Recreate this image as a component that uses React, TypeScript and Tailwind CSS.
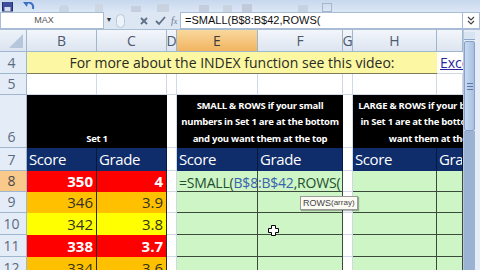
import React from "react";

const grid = "border-r border-b border-[#d0d7e5]";

function RowHead({ n, h, active }: { n: string; h: string; active?: boolean }) {
  return (
    <div
      className={`${h} w-[27px] shrink-0 flex items-end justify-center pb-[1px] pr-[3px] text-[14px] leading-none border-r border-b border-[#9eb6ce] ${
        active ? "bg-[#f9c98b] text-[#4a4a4a]" : "bg-[#e4ecf7] text-[#5b6b80]"
      }`}
    >
      <span className="pb-[2px]">{n}</span>
    </div>
  );
}

function QuickBar() {
  return (
    <div className="h-[12px] bg-gradient-to-b from-[#c7d8ee] to-[#dce7f5] flex items-end gap-[10px] pl-[2px] overflow-hidden">
      <svg width="11" height="10" viewBox="0 0 11 10">
        <rect x="0.5" y="-3" width="10" height="12" fill="#3d4f9a" stroke="#24326e" />
        <rect x="2.5" y="5" width="6" height="4" fill="#d8def0" />
      </svg>
      <svg width="12" height="10" viewBox="0 0 12 10">
        <path d="M2 2 C6 -1 11 1 10 7" fill="none" stroke="#3a6fc4" strokeWidth="2" />
        <path d="M0 0 L4 5 L5 0 Z" fill="#3a6fc4" />
      </svg>
      <div className="w-[10px] h-[7px] rounded-t-sm bg-[#c9d4e4] ml-[14px]" />
      <div className="w-[8px] h-[8px] bg-[#cdd6e3] ml-[16px]" />
      <div className="w-[10px] h-[6px] bg-[#c5cfdd] ml-[18px]" />
      <div className="w-[12px] h-[8px] bg-[#c9d2df] ml-[6px]" />
      <div className="w-[10px] h-[7px] bg-[#c3cddb] ml-[20px]" />
      <div className="w-[9px] h-[7px] bg-[#cad3e0] ml-[4px]" />
      <div className="w-[10px] h-[8px] bg-[#c0cadb]" />
      <div className="w-[10px] h-[7px] bg-[#c8d1df] ml-[36px]" />
      <div className="w-[10px] h-[9px] border border-[#a8b6ca] ml-[4px]" />
    </div>
  );
}

function FormulaBar() {
  return (
    <div className="h-[18px] flex bg-[#dde7f4] border-b border-[#a9bcd6]">
      <div className="w-[104px] bg-white border border-[#a9bcd6] flex items-center justify-center pr-[16px] text-[9px] text-[#555] font-['Liberation_Sans',sans-serif]">
        MAX
      </div>
      <div className="w-[10px] flex items-center justify-center text-[7px] text-[#333]">▼</div>
      <div className="w-[66px] flex items-center">
        <div className="w-[9px] h-[14px] rounded-full border border-[#b7c6da] bg-[#eef3fa] ml-[2px]" />
        <svg width="10" height="10" viewBox="0 0 10 10" className="ml-[14px]">
          <path d="M2 2 L8 8 M8 2 L2 8" stroke="#5f6f86" strokeWidth="1.8" />
        </svg>
        <svg width="11" height="10" viewBox="0 0 11 10" className="ml-[6px]">
          <path d="M1 5 L4 8 L10 1" fill="none" stroke="#5f6f86" strokeWidth="1.8" />
        </svg>
        <span className="ml-[5px] text-[10px] italic text-[#6b7890] font-['Liberation_Serif',serif]">
          f<span className="text-[8px]">x</span>
        </span>
      </div>
      <div className="flex-1 bg-white border border-[#a9bcd6] flex items-center pl-[4px] text-[11px] text-[#111] font-['Liberation_Sans',sans-serif]">
        =SMALL(B$8:B$42,ROWS(
      </div>
      <div className="w-[17px] bg-white border-y border-r border-[#a9bcd6] flex items-center justify-center">
        <svg width="8" height="10" viewBox="0 0 8 10">
          <path d="M1 1 L4 4 L7 1 M1 5 L4 8 L7 5" fill="none" stroke="#444" strokeWidth="1.2" />
        </svg>
      </div>
    </div>
  );
}

function ColHeaders() {
  const cols: [string, string, boolean?][] = [
    ["B", "w-[70px]"],
    ["C", "w-[70px]"],
    ["D", "w-[10px]"],
    ["E", "w-[81px]", true],
    ["F", "w-[85px]"],
    ["G", "w-[10px]"],
    ["H", "w-[84px]"],
    ["", "w-[26px]"],
  ];
  return (
    <div className="flex h-[22px]">
      <div className="w-[27px] bg-gradient-to-b from-[#eef3f9] to-[#dbe4f0] border-r border-b border-[#9eb6ce] relative">
        <div className="absolute right-[3px] bottom-[3px] w-0 h-0 border-l-[14px] border-l-transparent border-b-[14px] border-b-[#b6c7dc]" />
      </div>
      {cols.map(([l, w, act]) => (
        <div
          key={l + w}
          className={`${w} flex items-center justify-center text-[14px] border-r border-b border-[#9eb6ce] ${
            act
              ? "bg-gradient-to-b from-[#f9d89c] to-[#f1b45f] text-[#3b3b3b]"
              : "bg-gradient-to-b from-[#f3f6fb] to-[#dde5f0] text-[#4c5a70]"
          }`}
        >
          {l}
        </div>
      ))}
    </div>
  );
}

const navy = "bg-[#0f2c6b] text-white text-[15px] tracking-[-0.4px] border-r border-[#08183d] flex items-center pl-[2px] whitespace-nowrap";
const green = "bg-[#cdf5c6] border-r border-b border-[#3c4a3c]";
const banner = "text-white font-bold text-[9.5px] tracking-[-0.25px] leading-[16.5px] whitespace-nowrap";

function DataRow({
  n,
  h,
  bg,
  score,
  grade,
  light,
  active,
  formula,
}: {
  n: string;
  h: string;
  bg: string;
  score: string;
  grade: string;
  light?: boolean;
  active?: boolean;
  formula?: boolean;
}) {
  const txt = light ? "text-white font-bold" : "text-[#333320]";
  return (
    <div className={`flex ${h}`}>
      <RowHead n={n} h={h} active={active} />
      <div className={`w-[70px] ${bg} ${txt} border-r border-[#2b2b2b] flex items-center justify-end pr-[3px] text-[15px]`}>{score}</div>
      <div className={`w-[70px] ${bg} ${txt} border-r border-[#2b2b2b] flex items-center justify-end pr-[3px] text-[15px]`}>{grade}</div>
      <div className={`w-[10px] ${grid}`} />
      <div className={`w-[81px] ${green} relative`}>
        {formula && (
          <div className="absolute left-[2px] top-[1px] whitespace-nowrap text-[14px] tracking-[-0.2px] text-[#234f2c] z-10">
            =SMALL(<span className="text-[#3a62ad]">B$8:B$42</span>,ROWS(
          </div>
        )}
      </div>
      <div className={`w-[85px] ${green}`} />
      <div className={`w-[10px] ${grid}`} />
      <div className={`w-[84px] ${green}`} />
      <div className={`w-[26px] ${green}`} />
    </div>
  );
}

function ScrollBar() {
  return (
    <div className="w-[17px] h-[240px] bg-[#e6edf6] border-l border-[#b7c7dc] flex flex-col items-start">
      <div className="w-[11px] h-[8px] mt-[2px] border-b border-[#8fa6c6] bg-[#d9e4f2]" />
      <div className="w-[11px] h-[90px] mt-[1px] bg-gradient-to-r from-[#c9daf0] to-[#a7c0e2] border border-[#86a2c8] rounded-[2px] flex flex-col items-center justify-center gap-[2px]">
        <div className="w-[6px] h-[1px] bg-[#5c7aa5]" />
        <div className="w-[6px] h-[1px] bg-[#5c7aa5]" />
        <div className="w-[6px] h-[1px] bg-[#5c7aa5]" />
      </div>
      <div className="w-[11px] flex-1 bg-[#9bb2d3]" />
    </div>
  );
}

export default function App() {
  return (
    <div className="w-[480px] h-[270px] overflow-hidden bg-white relative font-['Open_Sans',sans-serif]">
      <QuickBar />
      <FormulaBar />
      <div className="flex">
        <div className="w-[463px] shrink-0">
          <ColHeaders />

          {/* row 4 */}
          <div className="flex h-[22px]">
            <RowHead n="4" h="h-[22px]" />
            <div className="w-[410px] bg-[#fbf7a3] border-b border-[#7d7a55] flex items-center justify-center text-[14px] text-[#2a2a22] leading-none">
              For more about the INDEX function see this video:
            </div>
            <div className="w-[26px] border-b border-[#d0d7e5] flex items-center pl-[3px] text-[14px] text-[#2626a0] underline overflow-hidden whitespace-nowrap leading-none">
              Excel
            </div>
          </div>

          {/* row 5 */}
          <div className="flex h-[21px]">
            <RowHead n="5" h="h-[21px]" />
            <div className={`w-[70px] ${grid}`} />
            <div className={`w-[70px] ${grid}`} />
            <div className={`w-[10px] ${grid}`} />
            <div className={`w-[81px] ${grid}`} />
            <div className={`w-[85px] ${grid}`} />
            <div className={`w-[10px] ${grid}`} />
            <div className={`w-[84px] ${grid}`} />
            <div className={`w-[26px] ${grid}`} />
          </div>

          {/* row 6 */}
          <div className="flex h-[53px]">
            <RowHead n="6" h="h-[53px]" />
            <div className={`w-[140px] bg-black ${banner} flex items-end justify-center pb-[1px]`}>Set 1</div>
            <div className={`w-[10px] ${grid}`} />
            <div className={`w-[166px] bg-black ${banner} flex flex-col items-center justify-end pb-[1px]`}>
              <div>SMALL &amp; ROWS if your small</div>
              <div>numbers in Set 1 are at the bottom</div>
              <div>and you want them at the top</div>
            </div>
            <div className={`w-[10px] ${grid}`} />
            <div className="w-[110px] bg-black overflow-hidden">
              <div className={`w-[168px] h-full ${banner} flex flex-col items-center justify-end pb-[1px]`}>
                <div>LARGE &amp; ROWS if your big numbers</div>
                <div>in Set 1 are at the bottom and you</div>
                <div>want them at the top</div>
              </div>
            </div>
          </div>

          {/* row 7 */}
          <div className="flex h-[23px]">
            <RowHead n="7" h="h-[23px]" />
            <div className={`w-[70px] ${navy}`}>Score</div>
            <div className={`w-[70px] ${navy}`}>Grade</div>
            <div className={`w-[10px] ${grid}`} />
            <div className={`w-[81px] ${navy}`}>Score</div>
            <div className={`w-[85px] ${navy}`}>Grade</div>
            <div className={`w-[10px] ${grid}`} />
            <div className={`w-[84px] ${navy}`}>Score</div>
            <div className={`w-[26px] ${navy} overflow-hidden`}>Grade</div>
          </div>

          <DataRow n="8" h="h-[21px]" bg="bg-[#ff0000]" score="350" grade="4" light active formula />
          <DataRow n="9" h="h-[21px]" bg="bg-[#ffc000]" score="346" grade="3.9" />
          <DataRow n="10" h="h-[22px]" bg="bg-[#ffff00]" score="342" grade="3.8" />
          <DataRow n="11" h="h-[22px]" bg="bg-[#ff0000]" score="338" grade="3.7" light />
          <DataRow n="12" h="h-[22px]" bg="bg-[#ffc000]" score="334" grade="3.6" />
        </div>
        <ScrollBar />
      </div>

      {/* function tooltip */}
      <div className="absolute left-[300px] top-[196px] h-[14px] px-[2px] bg-[#fbfbf4] border border-[#9a9a9a] shadow-[1px_1px_1px_rgba(0,0,0,0.3)] flex items-center text-[9px] text-[#444] font-['Liberation_Sans',sans-serif] leading-none">
        ROWS<span className="text-[8px]">(array)</span>
      </div>

      {/* cell cursor */}
      <svg className="absolute left-[268px] top-[225px]" width="11" height="11" viewBox="0 0 11 11">
        <path d="M3.5 0.5 H7.5 V3.5 H10.5 V7.5 H7.5 V10.5 H3.5 V7.5 H0.5 V3.5 H3.5 Z" fill="#fff" stroke="#000" />
      </svg>
    </div>
  );
}
